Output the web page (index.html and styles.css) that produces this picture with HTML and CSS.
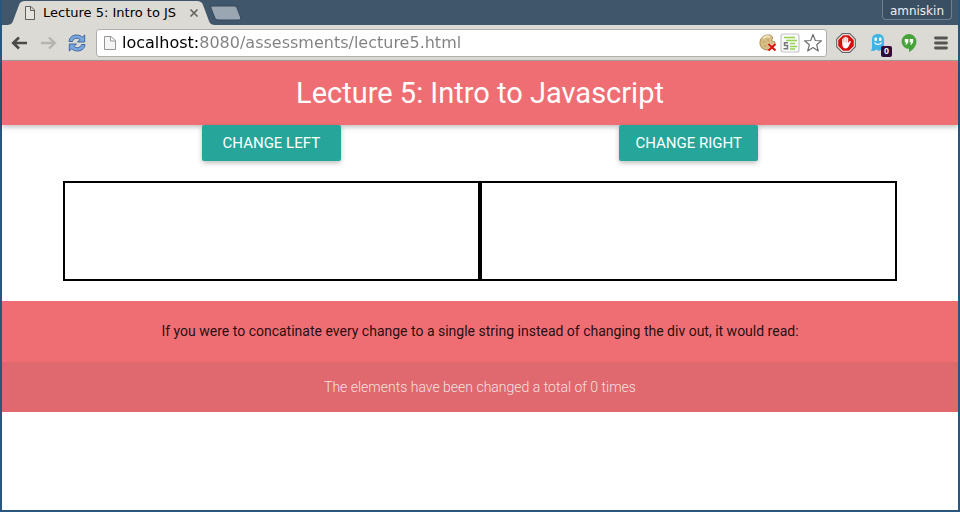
FILE: index.html
```html
<!DOCTYPE html>
<html lang="en">
<head>
<meta charset="utf-8">
<title>Lecture 5: Intro to JS</title>
<link rel="stylesheet" href="styles.css">
</head>
<body>
<div class="window">
  <div class="tabstrip">
    <div class="tab">
      <svg class="tab-shape" viewBox="0 0 210 25" preserveAspectRatio="none" aria-hidden="true">
        <path d="M0 25C4 25 6 24 7 21L13 5C14 2 16 1 19 1H190C194 1 196 2 197 5L203 21C204 24 206 25 210 25Z" fill="#dcdad5"/>
      </svg>
      <svg class="page-icon" viewBox="0 0 12 16" aria-hidden="true"><path d="M1.5 1.5H7L10.500 5V14.500H1.500ZM6.500 1.500V5.500H10.500" fill="#e6e4df" stroke="#5f5f5d"/></svg>
      <span class="tab-title">Lecture 5: Intro to JS</span>
      <button class="tab-close" type="button" aria-label="Close tab"><svg width="10" height="10" viewBox="0 0 10 10"><path d="M1.500 1.500L8.500 8.500M8.500 1.500L1.500 8.500" stroke="#62625f" stroke-width="1.600"/></svg></button>
    </div>
    <button class="new-tab" type="button" aria-label="New tab"><svg width="32" height="16" viewBox="0 0 32 16"><path d="M3 1H24C26 1 26.500 2 27 3L30.500 12C31 14 30.500 15 28 15H9C6 15 5.500 14 4.500 12L1 3C.5 1.500 1 1 3 1Z" fill="#9aa6b1" stroke="#34495d"/></svg></button>
    <button class="profile" type="button">amniskin</button>
  </div>
  <div class="toolbar">
    <div class="nav">
      <button type="button" aria-label="Back"><svg width="18" height="18" viewBox="0 0 18 18"><path d="M17 9H4M9 3.500L3.200 9L9 14.500" fill="none" stroke="#4a4a48" stroke-width="2.600"/></svg></button>
      <button type="button" aria-label="Forward"><svg width="18" height="18" viewBox="0 0 18 18"><path d="M2 9H15M10 3.500L15.800 9L10 14.500" fill="none" stroke="#b5b4b0" stroke-width="2.400"/></svg></button>
      <button type="button" aria-label="Reload"><svg width="18" height="18" viewBox="0 0 18 18"><g fill="#79a6dc" stroke="#345f9b" stroke-width=".9" stroke-linejoin="round"><path id="arc" d="M1 7.500C1.500 3 4.500 1 8.500 1C11.300 1 13 2 14.200 3.200L16.700 1V8H9.500L11.900 5.600C11 4.700 10 4.300 8.700 4.300C6.500 4.300 5 5.500 4.500 7.500Z"/><use href="#arc" transform="rotate(180 9 9)"/></g></svg></button>
    </div>
    <div class="omnibox">
      <svg class="page-icon" viewBox="0 0 12 16" aria-hidden="true"><path d="M.5 1.500H7L11.500 5.500V14.500H.5ZM6.500 1.500V6H11.500" fill="#f5f5f5" stroke="#969696"/></svg>
      <input class="address" type="text" aria-label="Address" value="localhost:8080/assessments/lecture5.html">
      <button type="button" aria-label="Cookies blocked"><svg width="18" height="18" viewBox="0 0 18 18"><path d="M8.500 1C12 .5 14 2.500 13.500 5C12 6 12.500 7 14.500 7.500L16 8C16 13 13 16 9 16C4 16 1 13 1 9C1 4.500 4 1.300 8.500 1Z" fill="#d6bd84" stroke="#a68b55"/><path d="M4 4.500C6 2.500 9 2 11 3" fill="none" stroke="#f2e4bf" stroke-width="2"/><g fill="#b39a62"><circle cx="5" cy="8" r=".8"/><circle cx="9" cy="6" r=".8"/><circle cx="6" cy="12" r=".8"/></g><path d="M10 10L16.500 16.500M16.500 10L10 16.500" stroke="#fff" stroke-width="3"/><path d="M9.500 10L16.500 16.500M16.500 10L9.500 16.500" stroke="#d8140c" stroke-width="2.200"/></svg></button>
      <button type="button" aria-label="Script settings"><svg width="20" height="20" viewBox="0 0 20 20"><rect x="1" y="1" width="18" height="18" rx="2" fill="#fafafa" stroke="#c5c5c5" stroke-width="1.200"/><path d="M4 4.500H15M6 7.500H17M10 10.500H15M10 13.500H17M10 16H15" stroke="#93d44c" stroke-width="1.600"/><path d="M8 9.800H4.500V12.500H7.500V15.800H3.500" fill="none" stroke="#777" stroke-width="1.500"/></svg></button>
      <button type="button" aria-label="Bookmark"><svg width="20" height="20" viewBox="0 0 20 20"><path d="M10 1.500L12.300 7.500L18.500 7.800L13.700 11.800L15.300 18L10 14.500L4.700 18L6.300 11.800L1.500 7.800L7.700 7.500Z" fill="#fff" stroke="#6f6f6f" stroke-width="1.200" stroke-linejoin="round"/></svg></button>
    </div>
    <div class="extensions">
      <button type="button" aria-label="Ad blocker"><svg width="20" height="20" viewBox="0 0 20 20"><path d="M6.300 .7H13.700L19.300 6.300V13.700L13.700 19.300H6.300L.7 13.700V6.300Z" fill="#fff" stroke="#666" stroke-width="1.200"/><path d="M7 2.200H13L17.800 7V13L13 17.800H7L2.200 13V7Z" fill="#d5100c"/><path d="M6.200 11V6.200C6.200 5.200 7.500 5.200 7.500 6.200V5C7.500 4 9 4 9 5V4.500C9 3.500 10.600 3.500 10.600 4.500V5.200C10.600 4.200 12.200 4.200 12.200 5.200V10L13.300 8.500C14 7.700 15.200 8.200 14.700 9.200L12.500 13.500C11.500 16 7.500 16 6.700 13.500Z" fill="#fff"/><path d="M7.600 6V9.500M9.100 5V9.500M10.700 5V9.500" stroke="#dd7773" stroke-width=".5"/></svg></button>
      <button class="ghost" type="button" aria-label="Tracker blocker"><svg width="18" height="20" viewBox="0 0 18 20"><path d="M3 15V7C3 3 5 1 8.800 1C12.700 1 15 3 15 7V18L12.500 16.500L10 18L7 16.500L5 18L1 17.500C2.500 17 3 16 3 15Z" fill="#40b4e5"/><rect x="5.500" y="4.500" width="2.500" height="3.500" rx="1" fill="#fff"/><rect x="10" y="4.500" width="2.500" height="3.500" rx="1" fill="#fff"/><path d="M5.500 9.500C7 12 11 12 12.500 9.500" fill="none" stroke="#fff" stroke-width="1.300"/></svg><span class="badge">0</span></button>
      <button type="button" aria-label="Hangouts"><svg width="18" height="20" viewBox="0 0 18 20"><path d="M9 1A7.400 7.400 0 0 1 16.400 8.400C16.400 13 13 17 9 19V15.800A7.400 7.400 0 0 1 9 1Z" fill="#45a338"/><path d="M4.800 6H8.300V9.200L6.500 11.800H5.300L6.300 9.500H4.800ZM9.700 6H13.200V9.200L11.400 11.800H10.200L11.200 9.500H9.700Z" fill="#fff"/></svg></button>
      <button class="menu" type="button" aria-label="Menu"><svg width="14" height="14" viewBox="0 0 14 14"><path d="M1.500 2H12.500M1.500 7H12.500M1.500 12H12.500" stroke="#555553" stroke-width="2.800" stroke-linecap="round"/></svg></button>
    </div>
  </div>
  <div class="page">
    <header class="banner"><h1>Lecture 5: Intro to Javascript</h1></header>
    <main class="row">
      <div class="action"><button class="btn" type="button">Change Left</button></div>
      <div class="action"><button class="btn" type="button">Change Right</button></div>
      <div class="panel"></div>
      <div class="panel"></div>
    </main>
    <footer class="footer">
      <p class="summary">If you were to concatinate every change to a single string instead of changing the div out, it would read:</p>
      <p class="count">The elements have been changed a total of 0 times</p>
    </footer>
  </div>
</div>
</body>
</html>
```
FILE: styles.css
```css
* { box-sizing: border-box; }

body {
  margin: 0;
  background: #fff;
  font-family: Roboto, "Liberation Sans", sans-serif;
  font-size: 14px;
}

button {
  margin: 0;
  padding: 0;
  border: 0;
  background: none;
  font: inherit;
}

svg { display: block; }

.window {
  display: flex;
  flex-direction: column;
  min-height: 100vh;
  border: 2px solid #28567d;
  border-top: 0;
}

.tabstrip {
  display: flex;
  height: 25px;
  padding: 0 6px 0 4px;
  background: #40566b;
  font-family: "DejaVu Sans", sans-serif;
}

.tab {
  position: relative;
  display: flex;
  align-items: center;
  width: 210px;
  padding: 0 17px 0 18px;
}

.tab-shape {
  position: absolute;
  inset: 0;
  width: 100%;
  height: 100%;
}

.page-icon {
  position: relative;
  flex: none;
  width: 12px;
  height: 16px;
}

.tab-title {
  position: relative;
  flex: 1;
  margin-left: 7px;
  font-size: 13px;
  line-height: 16px;
  white-space: nowrap;
}

.tab-close { position: relative; }

.new-tab {
  align-self: center;
  margin-left: -6px;
}

.profile {
  height: 20px;
  margin-left: auto;
  padding: 0 7px;
  border: 1px solid #71808f;
  border-top: 0;
  border-radius: 0 0 4px 4px;
  background: #3b4f62;
  color: #eee;
  font-size: 12px;
  line-height: 22px;
}

.toolbar {
  display: flex;
  align-items: center;
  height: 36px;
  padding: 0 10px 0 8px;
  border-bottom: 1px solid #a5a39f;
  background: #dcdad5;
}

.nav {
  display: flex;
  gap: 11px;
  margin-right: 10px;
}

.omnibox {
  display: flex;
  flex: 1;
  align-items: center;
  gap: 3px;
  height: 28px;
  padding: 0 3px 0 7px;
  border: 1px solid #b0aeaa;
  border-radius: 3px;
  background: #fff;
}

.address {
  flex: 1;
  min-width: 0;
  margin-left: 3px;
  padding: 0;
  border: 0;
  outline: 0;
  background: linear-gradient(90deg, #000 76px, #808080 76px);
  background-clip: text;
  -webkit-background-clip: text;
  color: transparent;
  caret-color: #000;
  font-family: "DejaVu Sans", sans-serif;
  font-size: 16px;
  line-height: 24px;
}

.extensions {
  display: flex;
  align-items: center;
  gap: 13px;
  margin-left: 9px;
}

.menu { margin-left: 3px; }

.ghost { position: relative; }

.badge {
  position: absolute;
  right: -5px;
  bottom: -4px;
  width: 11px;
  height: 11px;
  border-radius: 2px;
  background: #330b37;
  color: #fff;
  font: bold 9px/11px "Liberation Sans", sans-serif;
  text-align: center;
}

.page {
  flex: 1;
  background: #fff;
}

.banner {
  position: relative;
  height: 64px;
  background: #ee6e73;
  box-shadow: 0 2px 5px rgba(0, 0, 0, .26);
  color: #fff;
  text-align: center;
}

h1 {
  margin: 0;
  font-size: 29px;
  font-weight: 400;
  line-height: 64px;
}

.row {
  display: grid;
  grid-template-columns: 1fr 1fr;
  row-gap: 20px;
  width: calc(85% + 22px);
  margin: 0 auto 20px;
}

.action {
  position: relative;
  text-align: center;
}

.btn {
  display: block;
  width: calc(100% / 3);
  height: 36px;
  margin: 0 auto;
  border-radius: 2px;
  background: #26a69a;
  box-shadow: 0 2px 5px rgba(0, 0, 0, .26);
  color: #fff;
  font-size: 15px;
  line-height: 36px;
  text-transform: uppercase;
  white-space: nowrap;
}

.panel {
  height: 100px;
  border: 2px solid #000;
}

.footer {
  background: #ee6e73;
  text-align: center;
}

.summary {
  margin: 0;
  padding: 20px 0;
  color: rgba(0, 0, 0, .87);
  line-height: 21px;
}

.count {
  margin: 0;
  background: rgba(51, 51, 51, .08);
  color: rgba(255, 255, 255, .8);
  font-weight: 300;
  line-height: 50px;
}
```
